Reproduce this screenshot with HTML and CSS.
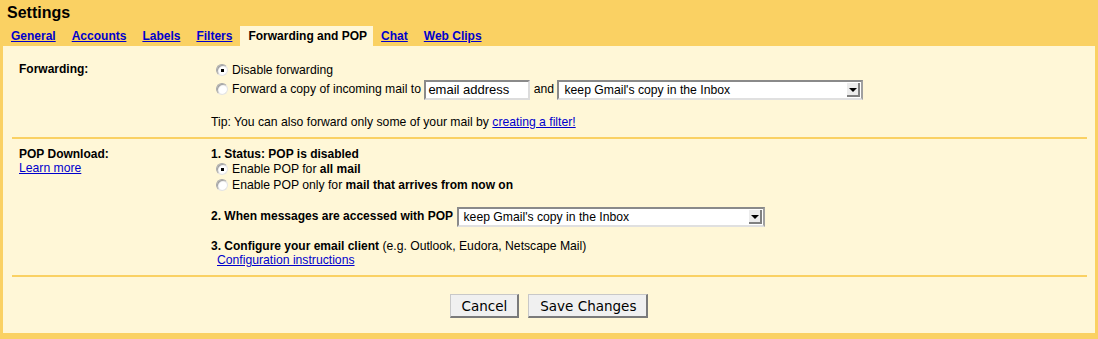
FILE: index.html
```html
<!DOCTYPE html>
<html>

<head>
    <meta charset="UTF-8">
    <title>Settings</title>
    <link rel="stylesheet" href="styles.css">
</head>

<body>
    <div class="frame">
        <div class="title">Settings</div>
        <div class="tabs">
            <a class="tab" href="#">General</a>
            <a class="tab" href="#">Accounts</a>
            <a class="tab" href="#">Labels</a>
            <a class="tab" href="#">Filters</a>
            <span class="tab active">Forwarding and POP</span>
            <a class="tab" href="#">Chat</a>
            <a class="tab" href="#">Web Clips</a>
        </div>

        <div class="content">
            <!-- Forwarding -->
            <div class="section forwarding">
                <div class="label">Forwarding:</div>
                <div class="value">
                    <div class="option"><span class="radio on"></span>Disable forwarding</div>
                    <div class="option tall"><span class="radio"></span>Forward a copy of incoming mail to <input type="text" class="textbox" value="email address"> and <span class="dropdown wide">keep Gmail's copy in the Inbox<span class="arrow"></span></span></div>
                    <div class="tip">Tip: You can also forward only some of your mail by <a href="#">creating a filter!</a></div>
                </div>
            </div>

            <div class="divider"></div>

            <!-- POP -->
            <div class="section pop">
                <div class="label">POP Download:<br><a class="plain" href="#">Learn more</a></div>
                <div class="value">
                    <div class="line"><b>1. Status: POP is disabled</b></div>
                    <div class="option"><span class="radio on"></span>Enable POP for <b>all mail</b></div>
                    <div class="option"><span class="radio"></span>Enable POP only for <b>mail that arrives from now on</b></div>
                    <div class="option access"><b>2. When messages are accessed with POP</b> <span class="dropdown">keep Gmail's copy in the Inbox<span class="arrow"></span></span></div>
                    <div class="line"><b>3. Configure your email client</b> (e.g. Outlook, Eudora, Netscape Mail)</div>
                    <div class="line indent"><a href="#">Configuration instructions</a></div>
                </div>
            </div>

            <div class="divider"></div>

            <div class="actions">
                <button class="btn">Cancel</button>
                <button class="btn">Save Changes</button>
            </div>
        </div>
    </div>
</body>

</html>
```

FILE: styles.css
```css
body {
    margin: 0;
    background-color: #fad163;
    font-family: 'Liberation Sans', Arial, sans-serif;
    font-size: 12.2px;
    color: #000;
}

b {
    font-size: 12px;
}

.frame {
    padding: 0 3px 6px 3px;
}

.title {
    font-size: 16px;
    font-weight: bold;
    line-height: 26px;
    padding-left: 4px;
}

.tabs {
    display: flex;
    height: 20px;
    line-height: 20px;
    font-size: 12px;
}

.tab {
    padding: 0 8px;
    font-weight: bold;
    color: #0000cc;
}

.tab.active {
    background-color: #fff7d7;
    color: #000;
    padding-right: 6px;
}

.content {
    background-color: #fff7d7;
}

a {
    color: #0000cc;
}

.section {
    display: grid;
    grid-template-columns: 192px 1fr;
    padding-left: 16px;
}

.label {
    font-weight: bold;
    font-size: 12px;
    line-height: 14px;
}

.label .plain {
    font-weight: normal;
    font-size: 12.2px;
}

.forwarding {
    padding: 16px 0 7px 16px;
}

.forwarding .label {
    line-height: 15px;
}

.pop {
    padding: 8px 0 8px 16px;
}

.option {
    height: 16px;
    line-height: 16px;
    margin-left: 5px;
    white-space: nowrap;
}

.option.tall {
    height: 22px;
    line-height: 22px;
}

.option.access {
    height: 21px;
    line-height: 21px;
    margin: 13px 0 12px 0;
}

.line {
    line-height: 14px;
}

.indent {
    padding-left: 6px;
}

.tip {
    margin-top: 15px;
    line-height: 15px;
}

.radio {
    position: relative;
    display: inline-block;
    vertical-align: middle;
    width: 10px;
    height: 10px;
    margin: -2px 4px 0 0;
    border-radius: 50%;
    background-color: #fff;
    border: 1px solid #a8a8a8;
    border-right-color: #e4e4e4;
    border-bottom-color: #e4e4e4;
    box-shadow: inset 1px 1px 1px #9a9a9a;
}

.radio.on::after {
    content: '';
    position: absolute;
    left: 4px;
    top: 4px;
    width: 3px;
    height: 3px;
    background-color: #000;
}

.textbox {
    box-sizing: border-box;
    width: 106px;
    height: 20px;
    margin: 0;
    padding: 0 2px;
    vertical-align: middle;
    border: 2px solid;
    border-color: #8a8a8a #dcdcdc #dcdcdc #8a8a8a;
    font-family: 'Liberation Sans', Arial, sans-serif;
    font-size: 13px;
    background-color: #fff;
}

.dropdown {
    position: relative;
    display: inline-block;
    box-sizing: border-box;
    vertical-align: middle;
    width: 308px;
    height: 20px;
    line-height: 16px;
    padding-left: 5px;
    border: 2px solid;
    border-color: #8a8a8a #a0a0a0 #e0e0e0 #8a8a8a;
    background-color: #fff;
}

.dropdown.wide {
    width: 306px;
}

.arrow {
    position: absolute;
    right: 1px;
    top: 1px;
    width: 11px;
    height: 12px;
    background-color: #ececec;
    border-right: 2px solid #808080;
    border-bottom: 2px solid #808080;
}

.arrow::after {
    content: '';
    position: absolute;
    left: 2px;
    top: 5px;
    border-left: 4px solid transparent;
    border-right: 4px solid transparent;
    border-top: 4px solid #000;
}

.divider {
    height: 2px;
    margin: 0 8px 0 9px;
    background-color: #fad163;
}

.actions {
    display: flex;
    justify-content: center;
    gap: 9px;
    padding: 17px 0 15px 0;
}

.btn {
    height: 24px;
    padding: 0 10px 0 11px;
    font-family: 'DejaVu Sans', sans-serif;
    font-size: 13.5px;
    color: #000;
    background-color: #f0f0f0;
    border: 1px solid #c8c8c8;
    border-right: 2px solid #7a7a7a;
    border-bottom: 2px solid #7a7a7a;
    border-radius: 0;
}
```
